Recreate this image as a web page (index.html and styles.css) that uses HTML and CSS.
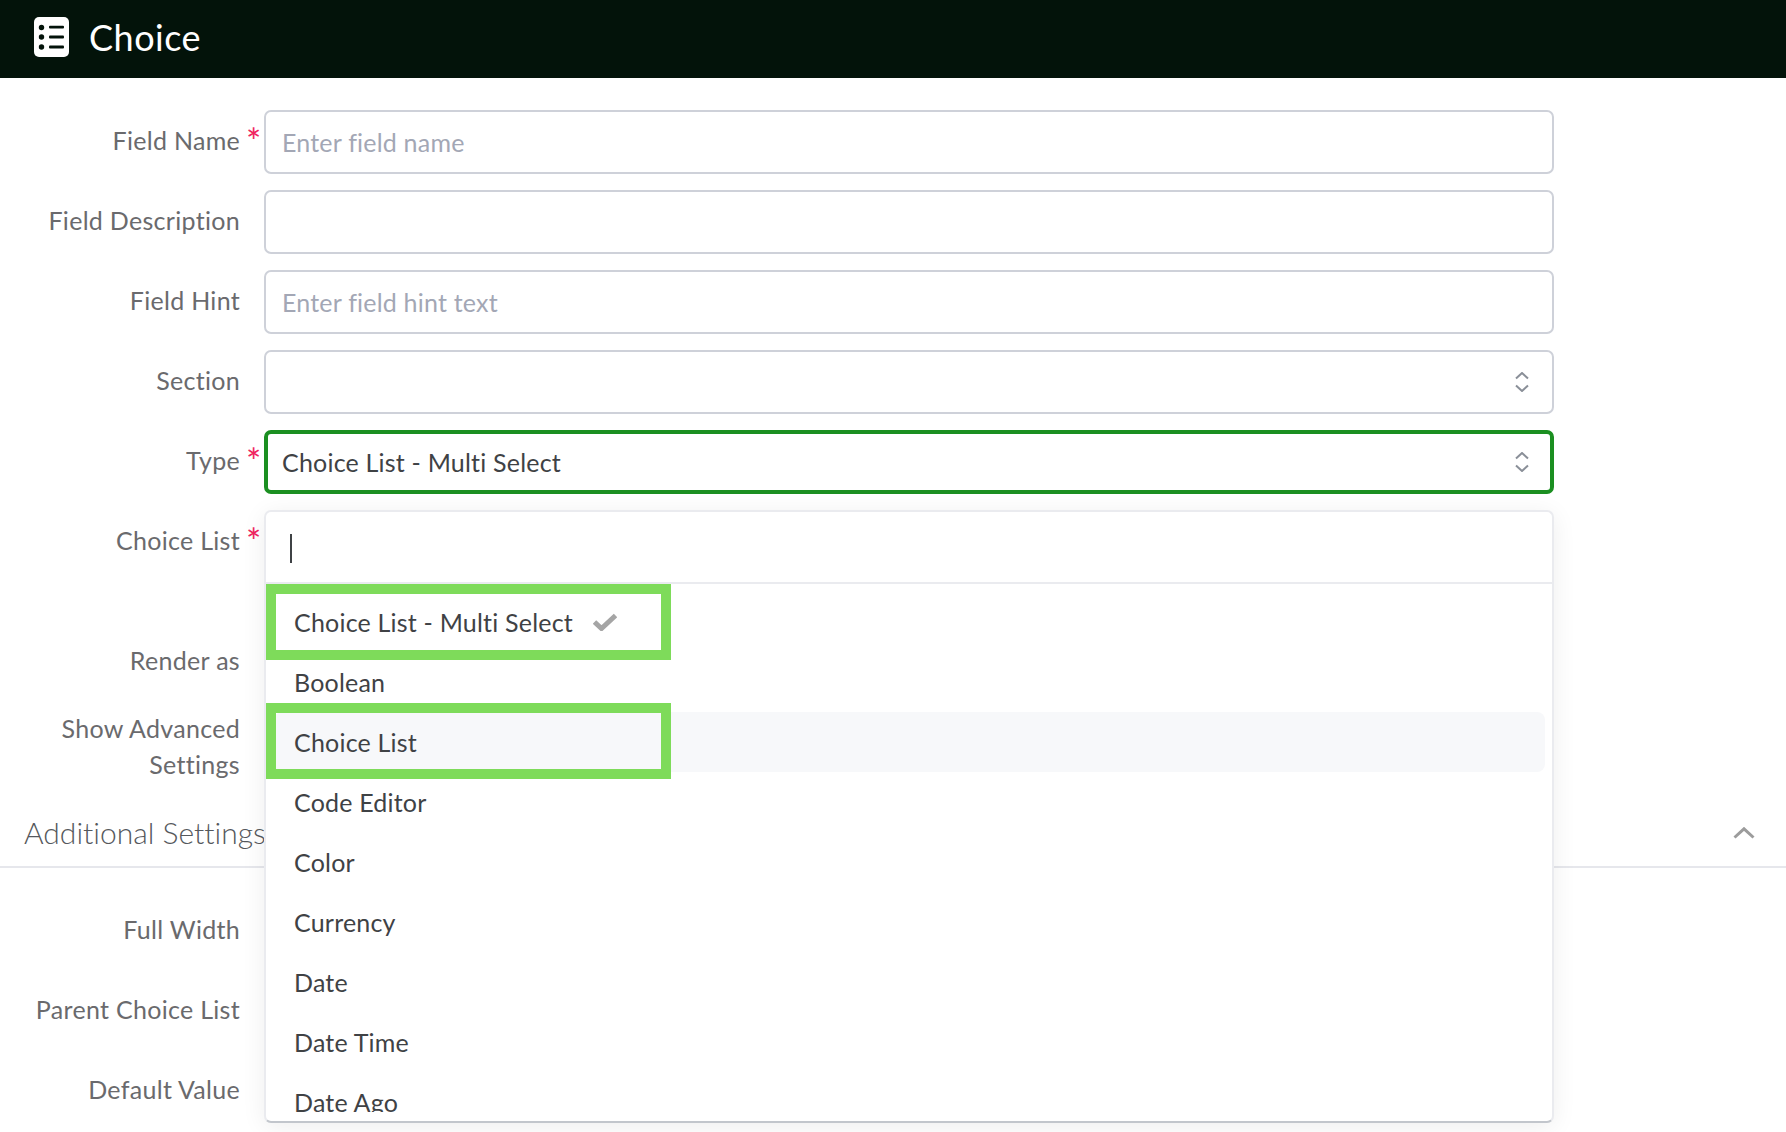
FILE: index.html
```html
<!DOCTYPE html>
<html lang="en">
<head>
<meta charset="utf-8">
<title>Choice</title>
<link rel="stylesheet" href="styles.css">
</head>
<body>
<header class="topbar">
  <svg class="topbar-icon" viewBox="0 0 35 40" aria-hidden="true">
    <rect width="35" height="40" rx="5" fill="#fff"/>
    <g fill="#03130a">
      <circle cx="7.5" cy="10.5" r="2.7"/><circle cx="7.5" cy="20" r="2.7"/><circle cx="7.5" cy="30" r="2.7"/>
      <rect x="15" y="8.8" width="15" height="2.8" rx="1"/><rect x="15" y="18.6" width="15" height="2.8" rx="1"/><rect x="15" y="28.6" width="15" height="2.8" rx="1"/>
    </g>
  </svg>
  <h1 class="topbar-title">Choice</h1>
</header>
<main class="form">
  <div class="row">
    <label class="label">Field Name</label><span class="req">*</span>
    <input class="control" placeholder="Enter field name">
  </div>
  <div class="row">
    <label class="label">Field Description</label><span></span>
    <input class="control">
  </div>
  <div class="row">
    <label class="label">Field Hint</label><span></span>
    <input class="control" placeholder="Enter field hint text">
  </div>
  <div class="row">
    <label class="label">Section</label><span></span>
    <div class="control select">
      <span></span>
      <svg class="updown" viewBox="0 0 14 20" aria-hidden="true"><path d="M1 6.5 7 1l6 5.5M1 13.5 7 19l6-5.5"/></svg>
    </div>
  </div>
  <div class="row">
    <label class="label">Type</label><span class="req">*</span>
    <div class="control select focused">
      <span>Choice List - Multi Select</span>
      <svg class="updown" viewBox="0 0 14 20" aria-hidden="true"><path d="M1 6.5 7 1l6 5.5M1 13.5 7 19l6-5.5"/></svg>
    </div>
  </div>
  <div class="row row-choice">
    <label class="label">Choice List</label><span class="req">*</span>
    <div class="anchor">
      <div class="dropdown">
        <div class="search"><span class="caret"></span></div>
        <ul class="options">
          <li class="option">Choice List - Multi Select
            <svg class="check" viewBox="0 0 24 18" aria-hidden="true"><path d="M1.5 9 8.5 15.5 22.5 2.5"/></svg>
            <span class="mark"></span></li>
          <li class="option">Boolean</li>
          <li class="option hovered">Choice List<span class="mark mark-low"></span></li>
          <li class="option">Code Editor</li>
          <li class="option">Color</li>
          <li class="option">Currency</li>
          <li class="option">Date</li>
          <li class="option">Date Time</li>
          <li class="option">Date Ago</li>
        </ul>
      </div>
    </div>
  </div>
  <div class="row row-short">
    <label class="label">Render as</label>
  </div>
  <div class="row row-short">
    <label class="label">Show Advanced<br>Settings</label>
  </div>
  <section class="section-head">
    <h2 class="section-title">Additional Settings</h2>
    <svg class="chevron" viewBox="0 0 22 12" aria-hidden="true"><path d="M1.5 10.5 11 1.8l9.5 8.7"/></svg>
  </section>
  <div class="section-body">
    <div class="row"><label class="label">Full Width</label></div>
    <div class="row"><label class="label">Parent Choice List</label></div>
    <div class="row"><label class="label">Default Value</label></div>
  </div>
</main>
</body>
</html>
```
FILE: styles.css
```css
html, body { margin: 0; padding: 0; height: 1132px; overflow: hidden; background: #fff; }
body { font-family: Lato, "Open Sans", sans-serif; font-variant-ligatures: none; color: #3f4245; font-size: 25px; letter-spacing: .2px; }

.topbar { height: 78px; background: #03130a; display: flex; align-items: center; gap: 21px; padding-left: 34px; }
.topbar-icon { width: 35px; height: 40px; display: block; margin-top: -4px; }
.topbar-title { margin: -4px 0 0 -1px; color: #fff; font-size: 36px; font-weight: 400; line-height: 40px; letter-spacing: .5px; }

.form { padding-top: 32px; }
.row { display: grid; grid-template-columns: 240px 24px 1290px; min-height: 64px; margin-bottom: 16px; }
.row-choice { min-height: 104px; }
.row-short { min-height: 52px; }

.label { text-align: right; color: #6a6a6d; line-height: 36px; padding-top: 12px; letter-spacing: .3px; }
.req { color: #f0245f; font-size: 36px; line-height: 30px; padding: 16px 0 0 6px; }

.control { box-sizing: border-box; width: 1290px; height: 64px; margin: 0; border: 2px solid #ced1d9; border-radius: 7px; padding: 0 16px; font: inherit; letter-spacing: inherit; color: #3f4245; background: #fff; outline: none; }
.control::placeholder { color: #a3a7b5; opacity: 1; }
.select { display: flex; align-items: center; justify-content: space-between; padding-right: 23px; }
.focused { border: 4px solid #1b8f21; padding-left: 14px; padding-right: 21px; }
.updown { width: 14px; height: 20px; fill: none; stroke: #8a8f98; stroke-width: 2; }

.anchor { position: relative; }
.dropdown { position: absolute; left: 0; top: 0; width: 1290px; height: 613px; box-sizing: border-box; background: #fff; border: 2px solid #eaebef; border-bottom-color: #c2c6cc; border-radius: 7px; box-shadow: 0 4px 24px rgba(0, 0, 0, .07); overflow: hidden; z-index: 2; }
.search { height: 70px; border-bottom: 2px solid #eaebef; display: flex; align-items: center; padding-left: 24px; }
.caret { width: 2px; height: 29px; background: #3f4245; margin-top: 3px; }
.options { list-style: none; margin: 0; padding: 8px 0 0; height: 520px; overflow: hidden; }
.option { position: relative; height: 60px; line-height: 60px; padding-left: 20px; margin: 0 7px 0 8px; border-radius: 8px; display: flex; align-items: center; }
.hovered { background: #f7f8fa; }
.check { width: 24px; height: 18px; margin-left: 20px; fill: none; stroke: #a5a5a5; stroke-width: 5; }
.mark { position: absolute; left: -8px; top: -8px; width: 405px; height: 76px; box-sizing: border-box; border: 10px solid #7edb5a; }
.mark-low { top: -9px; }

.section-head { display: flex; align-items: center; justify-content: space-between; margin-top: 30px; padding: 0 31px 14px 24px; border-bottom: 2px solid #e6e7ec; }
.section-title { margin: 0; font-size: 30px; font-weight: 300; line-height: 40px; color: #55585c; letter-spacing: 0; }
.chevron { width: 22px; height: 12px; fill: none; stroke: #9c9c9c; stroke-width: 3; margin-top: 2px; }
.section-body { padding-top: 31px; }
```
